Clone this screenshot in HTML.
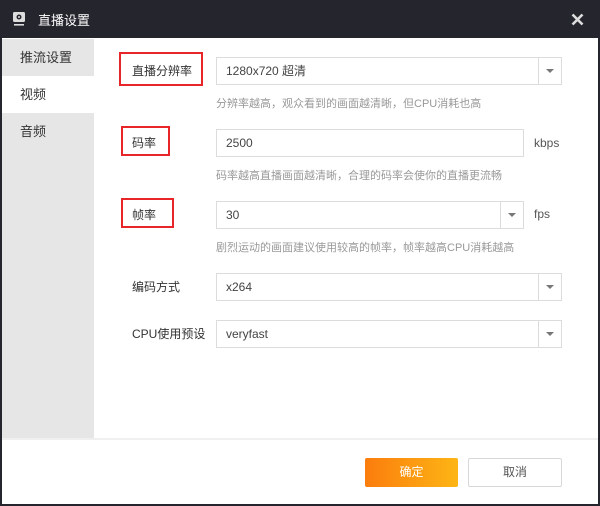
<!DOCTYPE html><html><head><meta charset="utf-8"><style>
*{margin:0;padding:0;box-sizing:border-box}
body{width:600px;height:506px;background:#24252d;font-family:"Liberation Sans","Noto Sans CJK SC",sans-serif;font-size:12px;color:#333;position:relative;overflow:hidden}
.a{position:absolute}
.title{left:0;top:0;width:600px;height:38px;background:#24252d;color:#fff;font-size:13px}
.main{left:2px;top:38px;width:596px;height:466px;background:#fff}
.side{left:2px;top:39px;width:92px;height:399px;background:#e6e6e6}
.item{position:absolute;left:0;width:92px;height:37px;line-height:37px;padding-left:18px;font-size:13px;color:#333}
.inp{position:absolute;height:28px;border:1px solid #dcdcdc;background:#fff;line-height:26px;padding-left:9px;font-size:12px;color:#444}
.dd{position:absolute;right:0;top:0;width:23px;height:26px;border-left:1px solid #dcdcdc}
.dd:after{content:"";position:absolute;left:7px;top:11px;border-left:4.5px solid transparent;border-right:4.5px solid transparent;border-top:4.5px solid #777}
.lbl{position:absolute;font-size:12px;color:#333}
.red{position:absolute;border:2px solid #e8262a}
.desc{position:absolute;left:216px;font-size:11px;color:#999}
.unit{position:absolute;left:534px;font-size:12px;color:#555}
</style></head><body>
<div class="a title">
<svg class="a" style="left:12px;top:11px" width="14" height="15" viewBox="0 0 14 15"><rect x="1" y="1" width="12" height="10" rx="1.5" fill="#ddd"/><circle cx="7" cy="6" r="2.5" fill="#24252d"/><circle cx="7" cy="6" r="1" fill="#ddd"/><rect x="2" y="13" width="10" height="1.6" fill="#ddd"/></svg>
<div class="a" style="left:38px;top:10px">直播设置</div>
<svg class="a" style="left:571px;top:13px" width="13" height="13" viewBox="0 0 13 13"><path d="M1.5 1.5L11.5 11.5M11.5 1.5L1.5 11.5" stroke="#ddd" stroke-width="2.6"/></svg>
</div>
<div class="a main"></div>
<div class="a side">
<div class="item" style="top:0">推流设置</div>
<div class="item" style="top:37px;background:#fff">视频</div>
<div class="item" style="top:74px">音频</div>
</div>
<div class="a" style="left:2px;top:438px;width:596px;height:2px;background:#f0f0f0"></div>

<div class="red" style="left:119px;top:52px;width:84px;height:34px"></div>
<div class="lbl" style="left:132px;top:62px">直播分辨率</div>
<div class="inp" style="left:216px;top:57px;width:346px">1280x720 超清<div class="dd"></div></div>
<div class="desc" style="top:95px">分辨率越高，观众看到的画面越清晰，但CPU消耗也高</div>

<div class="red" style="left:121px;top:126px;width:49px;height:30px"></div>
<div class="lbl" style="left:132px;top:134px">码率</div>
<div class="inp" style="left:216px;top:129px;width:308px">2500</div>
<div class="unit" style="top:136px">kbps</div>
<div class="desc" style="top:167px">码率越高直播画面越清晰，合理的码率会使你的直播更流畅</div>

<div class="red" style="left:121px;top:198px;width:53px;height:30px"></div>
<div class="lbl" style="left:132px;top:206px">帧率</div>
<div class="inp" style="left:216px;top:201px;width:308px">30<div class="dd"></div></div>
<div class="unit" style="top:207px">fps</div>
<div class="desc" style="top:239px">剧烈运动的画面建议使用较高的帧率，帧率越高CPU消耗越高</div>

<div class="lbl" style="left:132px;top:278px">编码方式</div>
<div class="inp" style="left:216px;top:273px;width:346px">x264<div class="dd"></div></div>
<div class="lbl" style="left:132px;top:325px">CPU使用预设</div>
<div class="inp" style="left:216px;top:320px;width:346px">veryfast<div class="dd"></div></div>

<div class="a" style="left:365px;top:458px;width:93px;height:29px;border-radius:2px;background:linear-gradient(90deg,#fb7d0d,#fdb515);color:#fff;text-align:center;line-height:29px">确定</div>
<div class="a" style="left:468px;top:458px;width:94px;height:29px;border-radius:2px;border:1px solid #d8d8d8;background:#fff;color:#555;text-align:center;line-height:27px">取消</div>
</body></html>
